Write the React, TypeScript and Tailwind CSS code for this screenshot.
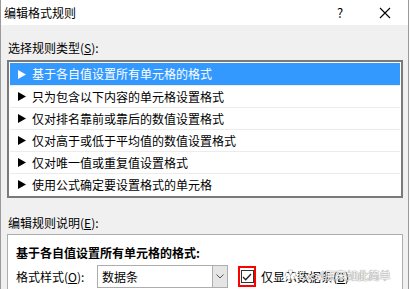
import React from "react";

const font = { fontFamily: '"Noto Sans CJK SC", "Noto Sans", sans-serif' };

const rules = [
  "基于各自值设置所有单元格的格式",
  "只为包含以下内容的单元格设置格式",
  "仅对排名靠前或靠后的数值设置格式",
  "仅对高于或低于平均值的数值设置格式",
  "仅对唯一值或重复值设置格式",
  "使用公式确定要设置格式的单元格",
];

function Arrow({ light }: { light: boolean }) {
  return (
    <svg width="8" height="9" viewBox="0 0 8 9" className="shrink-0">
      <polygon points="0,0 8,4.5 0,9" fill={light ? "#ffffff" : "#000000"} />
    </svg>
  );
}

export default function App() {
  return (
    <div
      className="w-[409px] h-[289px] overflow-hidden bg-[#f0f0f0] border-x border-[#9a9a9a] text-[12px] leading-[16px] text-black"
      style={font}
    >
      {/* title bar */}
      <div className="h-[25px] bg-white flex items-center pl-[3px]">
        <span className="flex-1">编辑格式规则</span>
        <span className="w-[12px] text-center text-[13px] mr-[33px]">?</span>
        <svg width="12" height="12" viewBox="0 0 12 12" className="mr-[17px]">
          <path d="M1 1L11 11M11 1L1 11" stroke="#000" strokeWidth="1.1" />
        </svg>
      </div>

      <div className="pl-[6px] pr-[5px] pt-[15px]">
        <div className="pl-[1px] h-[16px]">
          选择规则类型(<span className="underline">S</span>):
        </div>

        <div className="mt-[4px] border-2 border-[#7a7a7a] bg-white p-[1px]">
          {rules.map((r, i) => (
            <div
              key={r}
              className={
                i === 0
                  ? "h-[22px] flex items-center gap-[6px] pl-[8px] bg-[#3399ff] text-white"
                  : "h-[22px] flex items-center gap-[6px] pl-[8px] border-t border-[#ececec]"
              }
            >
              <Arrow light={i === 0} />
              <span>{r}</span>
            </div>
          ))}
        </div>

        <div className="mt-[17px] pl-[1px] h-[16px]">
          编辑规则说明(<span className="underline">E</span>):
        </div>

        <div className="mt-[3px] border border-[#adadad] bg-white h-[60px] pl-[8px] pt-[10px]">
          <div className="font-bold">基于各自值设置所有单元格的格式:</div>
          <div className="mt-[4px] flex items-center">
            <span className="w-[81px]">
              格式样式(<span className="underline">O</span>):
            </span>
            <div className="w-[131px] h-[23px] border border-[#adadad] flex items-center">
              <span className="flex-1 pl-[4px]">数据条</span>
              <div className="w-[15px] h-full bg-[#e5e5e5] border-l border-[#adadad] flex items-center justify-center">
                <svg width="8" height="5" viewBox="0 0 8 5">
                  <path d="M0.5 0.5L4 4L7.5 0.5" fill="none" stroke="#555" strokeWidth="1" />
                </svg>
              </div>
            </div>
            <div className="ml-[10px] w-[18px] h-[21px] border-2 border-[#ff0000] flex items-center justify-center">
              <div className="w-[13px] h-[13px] border border-[#333] bg-white flex items-center justify-center">
                <svg width="10" height="8" viewBox="0 0 10 8">
                  <path d="M1 4L3.7 6.7L9 1" fill="none" stroke="#222" strokeWidth="1.3" />
                </svg>
              </div>
            </div>
            <div className="relative ml-[5px]">
              <span>
                仅显示数据条(<span className="underline">B</span>)
              </span>
              <span className="absolute left-[24px] top-[-2px] whitespace-nowrap text-[11px] text-white [text-shadow:0_0_1px_#777,0_0_1px_#777]">
                ✿ Excel原来如此简单
              </span>
            </div>
          </div>
        </div>
      </div>
    </div>
  );
}
